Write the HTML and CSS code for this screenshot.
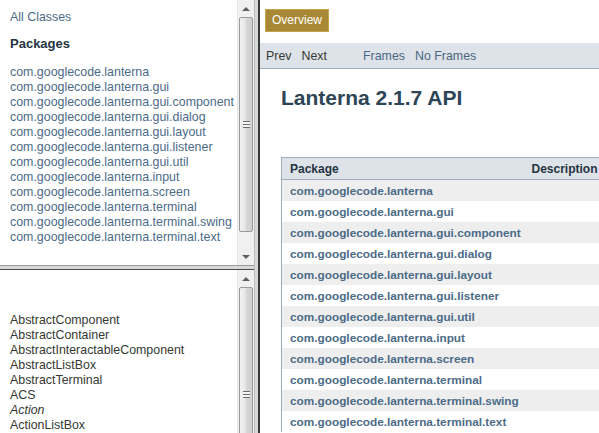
FILE: index.html
```html
<!DOCTYPE html>
<html>
<head>
<meta charset="utf-8">
<title>Lanterna 2.1.7 API</title>
<link rel="stylesheet" href="styles.css">
</head>
<body>
<div class="screen">
  <div class="left">
    <div class="pane pane-top">
      <div class="pane-body body-top">
        <div class="all-classes">All Classes</div>
        <h2 class="pkg-heading">Packages</h2>
        <ul class="list pkg-list">
          <li>com.googlecode.lanterna</li>
          <li>com.googlecode.lanterna.gui</li>
          <li>com.googlecode.lanterna.gui.component</li>
          <li>com.googlecode.lanterna.gui.dialog</li>
          <li>com.googlecode.lanterna.gui.layout</li>
          <li>com.googlecode.lanterna.gui.listener</li>
          <li>com.googlecode.lanterna.gui.util</li>
          <li>com.googlecode.lanterna.input</li>
          <li>com.googlecode.lanterna.screen</li>
          <li>com.googlecode.lanterna.terminal</li>
          <li>com.googlecode.lanterna.terminal.swing</li>
          <li>com.googlecode.lanterna.terminal.text</li>
        </ul>
      </div>
      <div class="scrollbar">
        <div class="sb-btn"><span class="arrow-up"></span></div>
        <div class="sb-thumb thumb-top"><span class="grip"></span></div>
        <div class="sb-track"></div>
        <div class="sb-btn"><span class="arrow-down"></span></div>
      </div>
    </div>
    <div class="hsplit"></div>
    <div class="pane pane-bottom">
      <div class="pane-body body-bottom">
        <ul class="list cls-list">
          <li>AbstractComponent</li>
          <li>AbstractContainer</li>
          <li>AbstractInteractableComponent</li>
          <li>AbstractListBox</li>
          <li>AbstractTerminal</li>
          <li>ACS</li>
          <li class="iface">Action</li>
          <li>ActionListBox</li>
        </ul>
      </div>
      <div class="scrollbar">
        <div class="sb-btn"><span class="arrow-up"></span></div>
        <div class="sb-thumb thumb-bottom"><span class="grip"></span></div>
      </div>
    </div>
  </div>
  <div class="vsplit"></div>
  <div class="right">
    <div class="topbar">
      <span class="overview">Overview</span>
    </div>
    <div class="subnav">
      <span class="nav-item nav-dark">Prev</span>
      <span class="nav-item nav-dark">Next</span>
      <span class="nav-item nav-link nav-gap">Frames</span>
      <span class="nav-item nav-link">No Frames</span>
    </div>
    <h1 class="title">Lanterna 2.1.7 API</h1>
    <table class="summary">
      <colgroup>
        <col class="c-pkg">
        <col class="c-desc">
      </colgroup>
      <thead>
        <tr><th>Package</th><th class="col-desc">Description</th></tr>
      </thead>
      <tbody>
        <tr class="alt"><td>com.googlecode.lanterna</td><td></td></tr>
        <tr><td>com.googlecode.lanterna.gui</td><td></td></tr>
        <tr class="alt"><td>com.googlecode.lanterna.gui.component</td><td></td></tr>
        <tr><td>com.googlecode.lanterna.gui.dialog</td><td></td></tr>
        <tr class="alt"><td>com.googlecode.lanterna.gui.layout</td><td></td></tr>
        <tr><td>com.googlecode.lanterna.gui.listener</td><td></td></tr>
        <tr class="alt"><td>com.googlecode.lanterna.gui.util</td><td></td></tr>
        <tr><td>com.googlecode.lanterna.input</td><td></td></tr>
        <tr class="alt"><td>com.googlecode.lanterna.screen</td><td></td></tr>
        <tr><td>com.googlecode.lanterna.terminal</td><td></td></tr>
        <tr class="alt"><td>com.googlecode.lanterna.terminal.swing</td><td></td></tr>
        <tr><td>com.googlecode.lanterna.terminal.text</td><td></td></tr>
      </tbody>
    </table>
  </div>
</div>
</body>
</html>
```
FILE: styles.css
```css
html, body {
  margin: 0;
  padding: 0;
  background: #ffffff;
}
body {
  font-family: "Liberation Sans", Arial, sans-serif;
  font-size: 12px;
}
.screen {
  display: flex;
  width: 599px;
  height: 433px;
  overflow: hidden;
}
.left {
  width: 254px;
  flex: none;
  display: flex;
  flex-direction: column;
}
.pane {
  display: flex;
  overflow: hidden;
  background: #fff;
}
.pane-top {
  height: 265px;
  flex: none;
}
.pane-bottom {
  flex: 1;
}
.pane-body {
  flex: 1;
  overflow: hidden;
  padding-left: 10px;
}
.body-top {
  padding-top: 10px;
}
.body-bottom {
  padding-top: 43px;
}
.all-classes {
  color: #4c6b87;
  line-height: 15px;
  font-size: 12.4px;
}
.pkg-heading {
  margin: 11px 0 0 0;
  font-size: 13px;
  line-height: 16px;
  font-weight: bold;
  color: #253441;
}
.list {
  list-style: none;
  margin: 0;
  padding: 0;
}
.list li {
  line-height: 15px;
  white-space: nowrap;
  font-size: 12.4px;
}
.pkg-list {
  margin-top: 13px;
}
.pkg-list li {
  color: #4c6b87;
}
.cls-list li {
  color: #353833;
}
.cls-list .iface {
  font-style: italic;
}

/* scrollbars */
.scrollbar {
  width: 17px;
  flex: none;
  display: flex;
  flex-direction: column;
  background: #f0f0f0;
  border-left: 1px solid #e6e6e6;
  box-sizing: border-box;
}
.sb-btn {
  height: 17px;
  flex: none;
  display: flex;
  align-items: center;
  justify-content: center;
}
.arrow-up {
  width: 0;
  height: 0;
  border-left: 4px solid transparent;
  border-right: 4px solid transparent;
  border-bottom: 4px solid #606060;
}
.arrow-down {
  width: 0;
  height: 0;
  border-left: 4px solid transparent;
  border-right: 4px solid transparent;
  border-top: 4px solid #606060;
}
.sb-thumb {
  margin: 0 1px;
  border: 1px solid #9a9a9a;
  border-radius: 2px;
  background: linear-gradient(to right, #f2f2f2 0%, #e6e6e6 45%, #d6d6d6 55%, #cfcfcf 100%);
  display: flex;
  align-items: center;
  justify-content: center;
  box-sizing: border-box;
}
.thumb-top {
  height: 215px;
  flex: none;
}
.thumb-bottom {
  height: 215px;
  flex: none;
}
.sb-track {
  flex: 1;
}
.grip {
  width: 7px;
  height: 7px;
  background: repeating-linear-gradient(to bottom, #6e6e6e 0, #6e6e6e 1px, #f4f4f4 1px, #f4f4f4 3px);
}

/* splitters */
.hsplit {
  height: 5px;
  flex: none;
  background: #d8d8d8;
  border-top: 1px solid #9a9a9a;
  border-bottom: 1px solid #4a4a4a;
  box-sizing: border-box;
}
.vsplit {
  width: 4px;
  flex: none;
  background: #d8d8d8;
  border-left: 1px solid #bdbdbd;
  box-sizing: border-box;
}

/* right frame */
.right {
  flex: 1;
  min-width: 0;
  border-left: 2px solid #3a3a3a;
  overflow: hidden;
  background: #fff;
}
.topbar {
  padding: 9px 0 11px 5px;
  display: flex;
}
.overview {
  display: block;
  background: #a88834;
  border: 1px solid #c4a44c;
  color: #ffffff;
  padding: 0 6px;
  height: 21px;
  line-height: 21px;
  font-size: 12px;
}
.subnav {
  background: #dee3e9;
  border-bottom: 1px solid #9eadc0;
  height: 25px;
  display: flex;
  align-items: center;
  padding-left: 6px;
}
.nav-item {
  margin-right: 10px;
  font-size: 12.4px;
}
.nav-dark {
  color: #353833;
}
.nav-link {
  color: #4a6782;
}
.nav-gap {
  margin-left: 26px;
}
.title {
  margin: 16px 0 0 21px;
  font-size: 21px;
  line-height: 26px;
  font-weight: bold;
  color: #2c4557;
}
.summary {
  margin: 46px 0 0 21px;
  border-collapse: collapse;
  border-left: 1px solid #9eadc0;
  width: 360px;
  table-layout: fixed;
}
.c-pkg {
  width: 250px;
}
.c-desc {
  width: 110px;
}
.summary th {
  background: #dee3e9;
  border-top: 1px solid #9eadc0;
  border-bottom: 1px solid #9eadc0;
  text-align: left;
  font-weight: bold;
  color: #253441;
  height: 21px;
  padding: 0 8px;
  font-size: 12px;
  white-space: nowrap;
}
.summary th.col-desc {
  padding-left: 0;
}
.summary td {
  height: 21px;
  padding: 0 8px;
  font-weight: bold;
  color: #4c6b87;
  white-space: nowrap;
  font-size: 11.8px;
}
.summary tr.alt td {
  background: #eeeeef;
}
```
